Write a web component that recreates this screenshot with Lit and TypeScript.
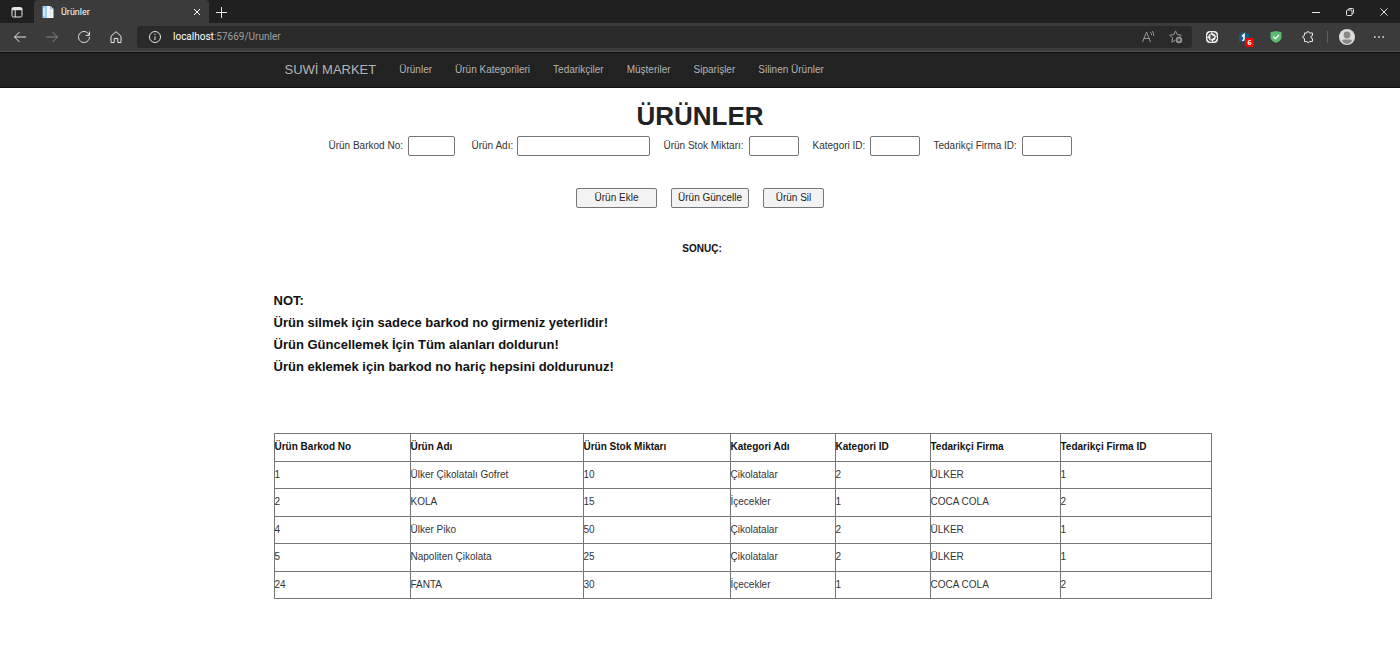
import { LitElement, html, css, svg } from "lit";
import { customElement } from "lit/decorators.js";

const HEADERS = ["Ürün Barkod No", "Ürün Adı", "Ürün Stok Miktarı", "Kategori Adı", "Kategori ID", "Tedarikçi Firma", "Tedarikçi Firma ID"];
const ROWS = [
  ["1", "Ülker Çikolatalı Gofret", "10", "Çikolatalar", "2", "ÜLKER", "1"],
  ["2", "KOLA", "15", "İçecekler", "1", "COCA COLA", "2"],
  ["4", "Ülker Piko", "50", "Çikolatalar", "2", "ÜLKER", "1"],
  ["5", "Napoliten Çikolata", "25", "Çikolatalar", "2", "ÜLKER", "1"],
  ["24", "FANTA", "30", "İçecekler", "1", "COCA COLA", "2"],
];
const LINKS = ["Ürünler", "Ürün Kategorileri", "Tedarikçiler", "Müşteriler", "Siparişler", "Silinen Ürünler"];
const FIELDS = [
  { id: "barkod", label: "Ürün Barkod No:" },
  { id: "ad", label: "Ürün Adı:" },
  { id: "stok", label: "Ürün Stok Miktarı:" },
  { id: "kategori", label: "Kategori ID:" },
  { id: "firma", label: "Tedarikçi Firma ID:" },
];

const icon = (body: unknown) => html`<svg class="icon" viewBox="0 0 16 16" aria-hidden="true">${body}</svg>`;

@customElement("browser-bar")
export class BrowserBar extends LitElement {
  static styles = css`
    :host { display: block; color: #e6e6e6; font-family: Roboto, "Open Sans", sans-serif; background: #202020; }
    button { display: flex; align-items: center; justify-content: center; padding: 0; border: 0; background: none; color: inherit; width: 32px; height: 24px; flex: none; }
    .icon { width: 16px; height: 16px; fill: none; stroke: currentColor; stroke-width: 1; flex: none; display: block; }
    .strip { display: flex; align-items: center; height: 23px; }
    .tab { display: flex; align-items: center; box-sizing: border-box; width: 175px; height: 23px; padding-left: 6px; gap: 5px; background: #3b3b3b; border-radius: 4px 4px 0 0; font-size: 9px; line-height: 12px; color: #fff; }
    .title { flex: 1; }
    .tab button, .plus { width: 24px; }
    .side { width: 34px; }
    .win { margin-left: auto; display: flex; gap: 2px; }
    .bar { display: flex; align-items: center; height: 28px; padding: 0 5px 0 4px; background: #3b3b3b; border-bottom: 1px solid #4c4c4c; }
    .dim { color: #858585; }
    .address { flex: 1; display: flex; align-items: center; height: 22px; margin: 0 4px 0 5px; padding-right: 2px; background: #2a2a2a; border-radius: 3px; }
    .url { flex: 1; font-size: 10px; line-height: 14px; color: #a0a0a0; }
    .url b { color: #fff; font-weight: 400; }
    .address .info { width: 36px; }
    .address .read { width: 28px; color: #9a9a9a; }
    .sep { width: 1px; height: 12px; background: #606060; margin: 0 3px; }
    .ext { position: relative; }
    .badge { position: absolute; right: 6px; bottom: 2px; width: 9px; height: 9px; border-radius: 2px; background: #f00; color: #fff; font: bold 7px/9px "Open Sans", sans-serif; text-align: center; }
  `;
  render() {
    return html`
      <div class="strip">
        <button class="side" aria-label="Sekme eylemleri">${icon(svg`<rect x="3" y="3.5" width="10" height="9.5" rx="1.5"/><path d="M3 5h10" stroke-width="2.4"/><path d="M6.2 6v7"/>`)}</button>
        <div class="tab">
          <svg class="icon" viewBox="0 0 16 16" aria-hidden="true"><path d="M3 2h7.500l3 3v9H3z" fill="#f3f6fa" stroke="none"/><path d="M2.500 2h4.500v12H2.500z" fill="#9fcdf0" stroke="none"/><path d="M4 4v8" stroke="#fff"/><path d="M10.500 2v3h3" stroke="#9bb2cc"/><path d="M9 8h3M9 10h3M9 12h3" stroke="#d3dfec"/></svg>
          <span class="title">Ürünler</span>
          <button aria-label="Sekmeyi kapat">${icon(svg`<path d="M5 5l6 6M11 5l-6 6"/>`)}</button>
        </div>
        <button class="plus" aria-label="Yeni sekme">${icon(svg`<path d="M8.500 3v11M3 8.500h11"/>`)}</button>
        <div class="win">
          <button aria-label="Küçült">${icon(svg`<path d="M4 8.500h8"/>`)}</button>
          <button aria-label="Geri yükle">${icon(svg`<rect x="4.500" y="6" width="5.500" height="5.500" rx="1"/><path d="M6.500 6V5.300q0-.8.8-.8h3.400q.8 0 .8.800v3.400q0 .8-.8.800H10"/>`)}</button>
          <button aria-label="Kapat">${icon(svg`<path d="M4.500 4.500l7 7M11.500 4.500l-7 7"/>`)}</button>
        </div>
      </div>
      <div class="bar">
        <button aria-label="Geri">${icon(svg`<path d="M14 8H2.500M7.500 3l-5 5 5 5"/>`)}</button>
        <button class="dim" aria-label="İleri">${icon(svg`<path d="M2 8h11.500M8.500 3l5 5-5 5"/>`)}</button>
        <button aria-label="Yenile">${icon(svg`<path d="M13.200 6.200A5.500 5.500 0 1 0 13.500 8M13.500 2.500v3.900H9.700"/>`)}</button>
        <button aria-label="Giriş">${icon(svg`<path d="M3 7.200L8 2.700l5 4.500v6.300H9.800V9.500H6.200v4H3z" stroke-linejoin="round"/>`)}</button>
        <div class="address">
          <button class="info" aria-label="Site bilgisi">${icon(svg`<circle cx="8" cy="8" r="5.500"/><path d="M8 7.300V11M8 4.800v1.200"/>`)}</button>
          <span class="url"><b>localhost</b>:57669/Urunler</span>
          <button class="read" aria-label="Sesli oku">${icon(svg`<path d="M2.500 13l4-10 4 10M4 9.500h5M10.500 3.200q1.300 1.200 1 3M12 2q2.200 2 1.600 4.800"/>`)}</button>
          <button class="read" aria-label="Sık kullanılanlara ekle">${icon(svg`<path d="M7.500 11.200l-3.600 2 .7-4.200L1.800 6.200l4-.6 1.700-3.600 1.800 3.600 4 .6-1.300 1.300" stroke-linejoin="round"/><circle cx="11" cy="11" r="3.200" fill="currentColor" stroke="none"/><path d="M11 9.200v3.600M9.200 11h3.600" stroke="#2a2a2a"/>`)}</button>
        </div>
        <button aria-label="Uzantı">${icon(svg`<rect x="2" y="2" width="12" height="12" rx="4" fill="#f2f2f2" stroke="none"/><circle cx="8" cy="8" r="4.400" stroke="#333" stroke-width="1.200" stroke-dasharray="5.600 1.300"/><path d="M7 6.200v3.600L9.800 8z" stroke="#333" stroke-width="1.100"/>`)}</button>
        <button class="ext" aria-label="Uzantı">${icon(svg`<path d="M3 5l2-.5V2.500l2 1.500h1.500L10.500 2.500v2L13 5v7.500H3z" fill="#145a8c" stroke="none"/><path d="M6 7.500l2-2v4.500q0 1.500-1.800 1.500" stroke="#fff" stroke-width="1.600"/>`)}<span class="badge">6</span></button>
        <button aria-label="Koruma">${icon(svg`<path d="M8 2l5.500 1.300V8q0 3.800-5.500 6-5.500-2.200-5.500-6V3.300z" fill="#5cb970" stroke="none"/><path d="M5.200 7.600l2.200 2.200L11 6" stroke="#fff" stroke-width="1.300"/>`)}</button>
        <button aria-label="Uzantılar">${icon(svg`<path d="M4.500 4h2.300q0-1.500 1.300-1.500T9.400 4h3.100v2.600q-1.700 0-1.700 1.500t1.700 1.500v2.900H9.400q0 1-1.300 1t-1.300-1H4.500V9.500Q2.800 9.500 2.800 8t1.700-1.500z" stroke-linejoin="round"/>`)}</button>
        <span class="sep"></span>
        <button aria-label="Profil"><svg class="icon" viewBox="0 0 16 16" aria-hidden="true"><circle cx="8" cy="8" r="8" fill="#dedbd8" stroke="none"/><circle cx="8" cy="6" r="3.400" fill="#8a8886" stroke="none"/><path d="M3 12q0-1.500 1.500-1.500h7q1.500 0 1.500 1.500-2 3-5 3t-5-3z" fill="#8a8886" stroke="none"/></svg></button>
        <button aria-label="Ayarlar">${icon(svg`<path d="M3 8h1.600M7.200 8h1.600M11.400 8H13" stroke-width="1.600"/>`)}</button>
      </div>
    `;
  }
}

@customElement("app-root")
export class AppRoot extends LitElement {
  static styles = css`
    :host { display: block; min-height: 100vh; background: #fff; color: #333; font: 10px/14px "Liberation Sans", Arial, sans-serif; }
    .navbar { background: #222; border: solid #101010; border-width: 1px 0; }
    .container { box-sizing: border-box; max-width: 853px; margin: 0 auto; }
    .nav { display: flex; align-items: center; height: 34px; padding-left: 11px; gap: 23px; }
    a { color: #b4b4b4; text-decoration: none; white-space: nowrap; }
    .brand { font-size: 13px; }
    h1 { margin: 12px 0 4px; font-size: 26px; line-height: 32px; text-align: center; color: #222; }
    .form { display: flex; justify-content: center; gap: 14px; }
    .field { display: flex; align-items: center; justify-content: space-between; white-space: nowrap; }
    input { box-sizing: border-box; width: 50px; height: 20px; border: 1px solid #767676; border-radius: 2px; padding: 1px 2px; font: inherit; }
    .barkod { width: 126px; margin-right: 3px; }
    .barkod input { width: 47px; }
    .ad { width: 178px; }
    .ad input { width: 133px; }
    .stok { width: 135px; }
    .kategori { width: 107px; }
    .firma { width: 138px; }
    .actions { display: flex; justify-content: center; gap: 14px; margin-top: 32px; }
    .actions button { box-sizing: border-box; height: 20px; padding: 0; border: 1px solid #767676; border-radius: 2px; background: #f3f3f3; color: #222; font: inherit; }
    .add { width: 81px; }
    .update { width: 78px; }
    .delete { width: 61px; }
    .result { margin: 34px 0 0; padding-left: 4px; text-align: center; font-weight: 700; color: #111; }
    .notes { margin-top: 34px; font-size: 13px; line-height: 22px; font-weight: 700; color: #111; }
    .notes p { margin: 0; }
    table { width: 110%; height: 166px; margin-top: 55px; border-collapse: collapse; table-layout: fixed; }
    th, td { border: 1px solid #767676; padding: 0; text-align: left; white-space: nowrap; }
    th { color: #111; }
    .c0 { width: 135px; }
    .c1 { width: 172px; }
    .c2 { width: 146px; }
    .c3 { width: 104px; }
    .c4 { width: 94px; }
    .c5 { width: 129px; }
  `;
  render() {
    return html`
      <browser-bar></browser-bar>
      <header class="navbar">
        <nav class="container nav">
          <a class="brand" href="#">SUWİ MARKET</a>
          ${LINKS.map((l) => html`<a href="#">${l}</a>`)}
        </nav>
      </header>
      <main class="container">
        <h1>ÜRÜNLER</h1>
        <form class="form">
          ${FIELDS.map((f) => html`<div class="field ${f.id}"><label for=${f.id}>${f.label}</label><input id=${f.id} type="text"></div>`)}
        </form>
        <div class="actions">
          <button class="add" type="button">Ürün Ekle</button>
          <button class="update" type="button">Ürün Güncelle</button>
          <button class="delete" type="button">Ürün Sil</button>
        </div>
        <p class="result">SONUÇ:</p>
        <section class="notes">
          <p>NOT:</p>
          <p>Ürün silmek için sadece barkod no girmeniz yeterlidir!</p>
          <p>Ürün Güncellemek İçin Tüm alanları doldurun!</p>
          <p>Ürün eklemek için barkod no hariç hepsini doldurunuz!</p>
        </section>
        <table>
          <tbody>
            <tr>${HEADERS.map((h, i) => html`<th class="c${i}" scope="col">${h}</th>`)}</tr>
            ${ROWS.map((r) => html`<tr>${r.map((c) => html`<td>${c}</td>`)}</tr>`)}
          </tbody>
        </table>
      </main>
    `;
  }
}
